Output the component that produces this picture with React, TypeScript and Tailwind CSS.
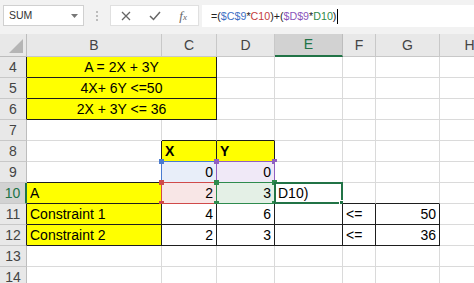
import React from "react";

type Cell = {
  text?: string;
  align?: "left" | "right" | "center";
  yellow?: boolean;
  bold?: boolean;
  span?: number;
  overlay?: "blue" | "purple" | "red" | "green" | "active";
};

const COLS = ["B", "C", "D", "E", "F", "G", "H"];
const ROWS = [4, 5, 6, 7, 8, 9, 10, 11, 12, 13, 14];

const boxed = new Set<string>([
  "B4", "C4", "B5", "C5", "B6", "C6",
  "C8", "D8",
  "B10", "B11", "B12",
  "C11", "D11", "E11", "F11", "G11",
  "C12", "D12", "E12", "F12", "G12",
]);

const data: Record<string, Cell> = {
  B4: { text: "A = 2X + 3Y", align: "center", yellow: true, span: 2 },
  B5: { text: "4X+ 6Y <=50", align: "center", yellow: true, span: 2 },
  B6: { text: "2X + 3Y <= 36", align: "center", yellow: true, span: 2 },
  C8: { text: "X", yellow: true, bold: true },
  D8: { text: "Y", yellow: true, bold: true },
  C9: { text: "0", align: "right", overlay: "blue" },
  D9: { text: "0", align: "right", overlay: "purple" },
  B10: { text: "A", yellow: true },
  C10: { text: "2", align: "right", overlay: "red" },
  D10: { text: "3", align: "right", overlay: "green" },
  E10: { text: "D10)", overlay: "active" },
  B11: { text: "Constraint 1", yellow: true },
  C11: { text: "4", align: "right" },
  D11: { text: "6", align: "right" },
  F11: { text: "<=" },
  G11: { text: "50", align: "right" },
  B12: { text: "Constraint 2", yellow: true },
  C12: { text: "2", align: "right" },
  D12: { text: "3", align: "right" },
  F12: { text: "<=" },
  G12: { text: "36", align: "right" },
};

function colNext(c: string) {
  return COLS[COLS.indexOf(c) + 1] ?? "Z";
}

function Overlay({ kind }: { kind: NonNullable<Cell["overlay"]> }) {
  if (kind === "active") {
    return (
      <div className="pointer-events-none absolute -inset-px border-2 border-[#217346]">
        <div className="absolute -right-[4px] -bottom-[4px] h-[6px] w-[6px] border border-white bg-[#217346]" />
      </div>
    );
  }
  const border =
    kind === "blue"
      ? "border-[#4a7bd0]"
      : kind === "purple"
      ? "border-[#9060c0]"
      : kind === "red"
      ? "border-[#d04a4a]"
      : "border-[#2e8b4e]";
  const fill =
    kind === "blue"
      ? "bg-[#e8eef9]"
      : kind === "purple"
      ? "bg-[#f0e9f7]"
      : kind === "red"
      ? "bg-[#f8e6e6]"
      : "bg-[#e4f0e6]";
  const sq =
    kind === "blue"
      ? "bg-[#4a7bd0]"
      : kind === "purple"
      ? "bg-[#9060c0]"
      : kind === "red"
      ? "bg-[#d04a4a]"
      : "bg-[#2e8b4e]";
  return (
    <>
      <div className={`pointer-events-none absolute inset-0 ${fill}`} />
      <div className={`pointer-events-none absolute -inset-px border ${border}`}>
        <div className={`absolute -left-[3px] -top-[3px] h-[5px] w-[5px] ${sq}`} />
        <div className={`absolute -right-[3px] -top-[3px] h-[5px] w-[5px] ${sq}`} />
        <div className={`absolute -left-[3px] -bottom-[3px] h-[5px] w-[5px] ${sq}`} />
        <div className={`absolute -right-[3px] -bottom-[3px] h-[5px] w-[5px] ${sq}`} />
      </div>
    </>
  );
}

function SheetCell({ row, col }: { row: number; col: string }) {
  const key = `${col}${row}`;
  const cell = data[key];
  // skip merged-away cells
  if (col === "C" && (row === 4 || row === 5 || row === 6)) return null;
  const span = cell?.span ?? 1;
  const lastCol = span === 2 ? colNext(col) : col;
  const rightBlack = boxed.has(key) || boxed.has(`${colNext(lastCol)}${row}`);
  const bottomBlack = boxed.has(key) || boxed.has(`${col}${row + 1}`);
  const align =
    cell?.align === "right"
      ? "justify-end pr-[3px]"
      : cell?.align === "center"
      ? "justify-center"
      : "justify-start pl-[3px]";
  return (
    <div
      className={`relative flex h-[21px] items-center border-r border-b ${
        rightBlack ? "border-r-[#1e1e1e]" : "border-r-[#dadada]"
      } ${bottomBlack ? "border-b-[#1e1e1e]" : "border-b-[#dadada]"} ${
        cell?.yellow ? "bg-[#ffff00]" : "bg-white"
      } ${span === 2 ? "col-span-2" : ""} ${align}`}
    >
      {cell?.overlay && <Overlay kind={cell.overlay} />}
      {cell?.text && (
        <span
          className={`relative z-10 whitespace-nowrap text-[14px] leading-none text-black ${
            cell.bold ? "font-bold" : ""
          }`}
        >
          {cell.text}
        </span>
      )}
    </div>
  );
}

export default function App() {
  return (
    <div
      className="h-[283px] w-[474px] overflow-hidden bg-white"
      style={{ fontFamily: '"Liberation Sans", Arial, sans-serif' }}
    >
      {/* Formula bar */}
      <div className="flex h-[34px] items-start gap-0 bg-[#f2f2f2] pt-[5px]">
        <div className="ml-[3px] flex h-[21px] w-[81px] items-center justify-between border border-[#d0d0d0] bg-white pl-[5px] pr-[5px]">
          <span className="text-[10.5px] text-[#333]">SUM</span>
          <svg width="7" height="4" viewBox="0 0 7 4">
            <path d="M0 0 L7 0 L3.5 4 Z" fill="#777" />
          </svg>
        </div>
        <div className="flex w-[26px] flex-col items-center gap-[2px] pt-[6px]">
          <div className="h-[2px] w-[2px] rounded-full bg-[#aaa]" />
          <div className="h-[2px] w-[2px] rounded-full bg-[#aaa]" />
          <div className="h-[2px] w-[2px] rounded-full bg-[#aaa]" />
        </div>
        <div className="flex h-[21px] w-[89px] items-center border border-[#e0e0e0] bg-white">
          <div className="flex w-[30px] justify-center">
            <svg width="10" height="10" viewBox="0 0 10 10">
              <path d="M1 1 L9 9 M9 1 L1 9" stroke="#666" strokeWidth="1.3" />
            </svg>
          </div>
          <div className="flex w-[28px] justify-center">
            <svg width="12" height="10" viewBox="0 0 12 10">
              <path d="M1 5 L4.5 8.5 L11 1" stroke="#666" strokeWidth="1.5" fill="none" />
            </svg>
          </div>
          <div className="flex w-[30px] justify-center">
            <span
              className="text-[13px] italic text-[#666]"
              style={{ fontFamily: '"Liberation Serif", serif' }}
            >
              f<span className="text-[9px]">x</span>
            </span>
          </div>
        </div>
        <div className="ml-[3px] flex h-[22px] flex-1 items-center bg-white pl-[9px] text-[10.7px]">
          <span className="text-[#222]">=(</span>
          <span className="text-[#3e6fc4]">$C$9</span>
          <span className="text-[#222]">*</span>
          <span className="text-[#c43c3c]">C10</span>
          <span className="text-[#222]">)+(</span>
          <span className="text-[#8a55bb]">$D$9</span>
          <span className="text-[#222]">*</span>
          <span className="text-[#2f8a4a]">D10</span>
          <span className="text-[#222]">)</span>
          <span className="ml-[1px] h-[15px] w-px bg-black" />
        </div>
      </div>

      {/* Sheet grid */}
      <div className="grid grid-cols-[27px_135px_55px_58px_68px_33px_64px_60px]">
        {/* header row */}
        <div className="relative h-[23px] border-r border-b border-[#bdbdbd] bg-[#e8e8e8]">
          <svg className="absolute right-[3px] bottom-[3px]" width="14" height="14" viewBox="0 0 14 14">
            <path d="M14 0 L14 14 L0 14 Z" fill="#b5b5b5" />
          </svg>
        </div>
        {COLS.map((c) => (
          <div
            key={c}
            className={`flex h-[23px] items-center justify-center border-r ${
              c === "E"
                ? "border-b-2 border-r-[#bdbdbd] border-b-[#217346] bg-[#d2d2d2] text-[#217346]"
                : "border-b border-[#c8c8c8] bg-[#e8e8e8] text-[#444]"
            } text-[14px]`}
          >
            {c}
          </div>
        ))}
        {ROWS.map((r) => (
          <React.Fragment key={r}>
            <div
              className={`flex h-[21px] items-center justify-center border-b border-b-[#c8c8c8] text-[14px] ${
                r === 10
                  ? "border-r-2 border-r-[#217346] bg-[#d2d2d2] text-[#217346]"
                  : `border-r bg-[#e8e8e8] text-[#444] ${
                      boxed.has(`B${r}`) ? "border-r-[#1e1e1e]" : "border-r-[#bdbdbd]"
                    }`
              }`}
            >
              {r}
            </div>
            {COLS.map((c) => (
              <SheetCell key={c} row={r} col={c} />
            ))}
          </React.Fragment>
        ))}
      </div>
    </div>
  );
}
